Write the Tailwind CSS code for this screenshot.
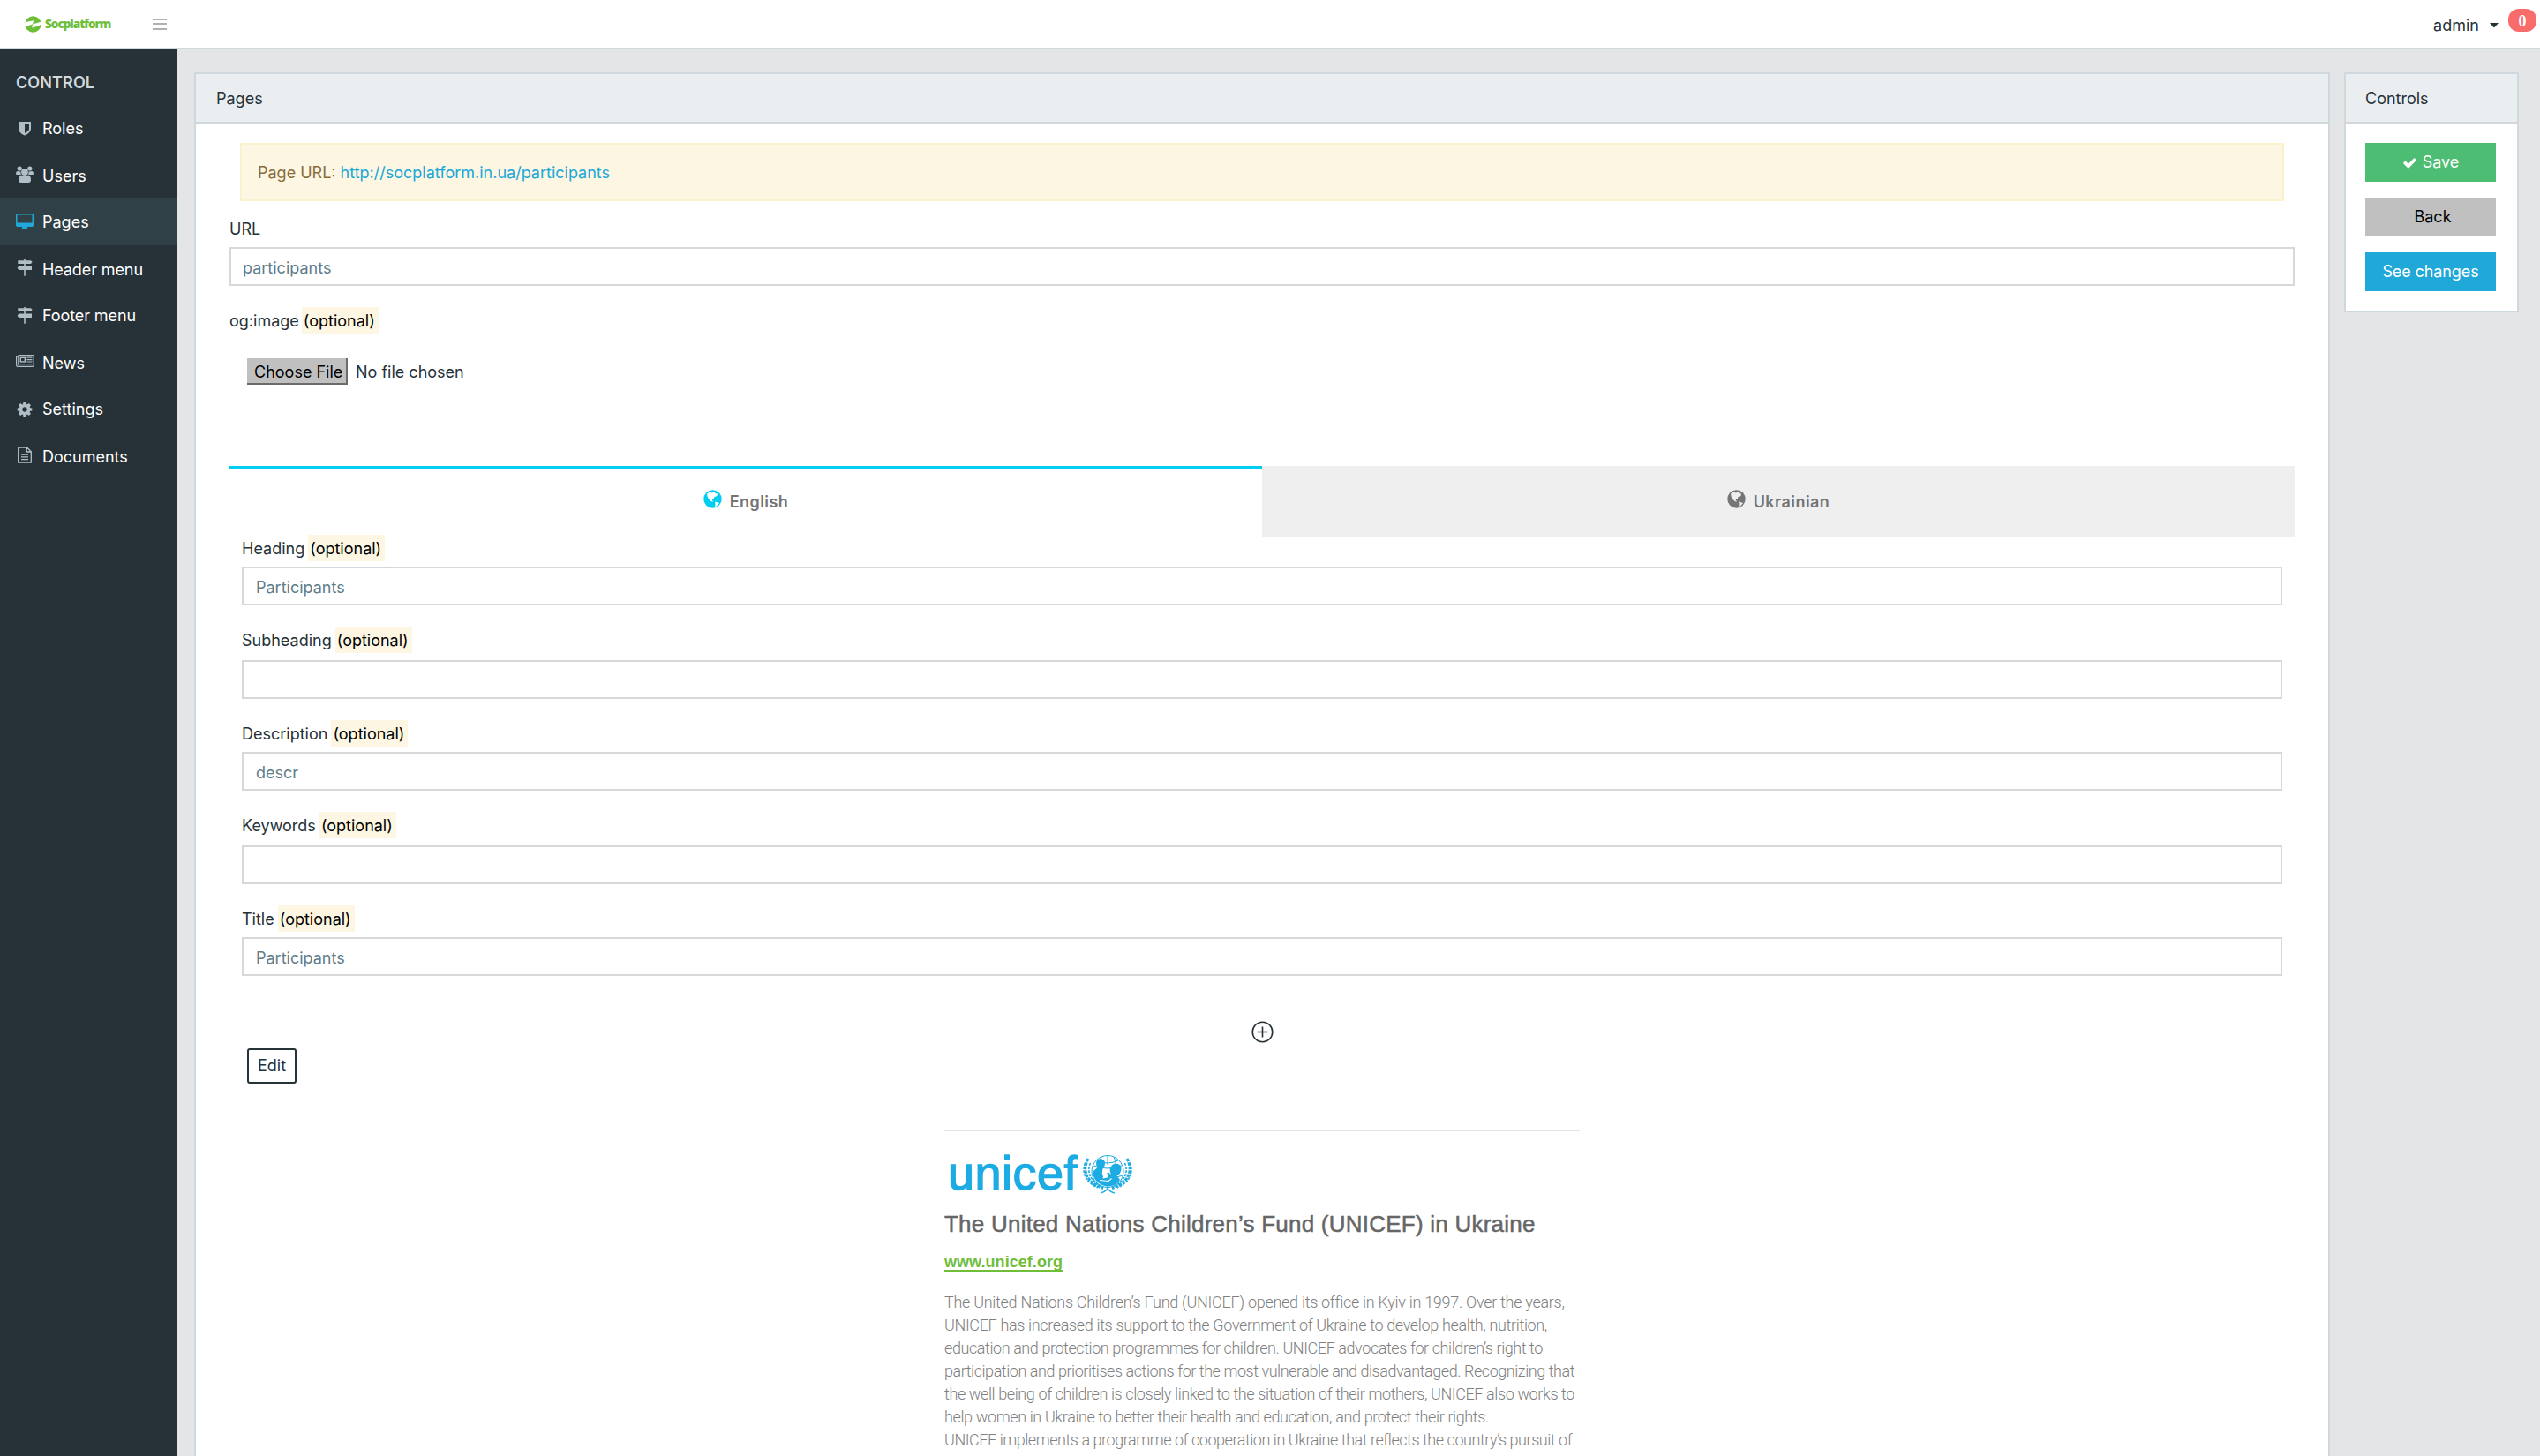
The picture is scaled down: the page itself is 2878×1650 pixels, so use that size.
<!DOCTYPE html>
<html lang="en">
<head>
<meta charset="utf-8">
<title>Pages</title>
<script src="https://cdn.jsdelivr.net/npm/@tailwindcss/browser@4"></script>
</head>
<body class="h-[1650px] w-[2878px] overflow-hidden bg-[#e4e5e6] font-['Inter',sans-serif] text-[18px] text-[#263238]">
<header class="flex h-[56px] items-center border-b-2 border-[#cfd8dc] bg-white">
  <svg class="ml-[28px] size-[19px]" viewBox="0 0 19 19"><circle cx="9.5" cy="9.5" r="9.2" fill="#6fbe3a"/><path d="M0 7.6C3.5 6.4 6.5 5.8 10.2 5.2L9 9.4 19 6.600V9.600C15 11.800 12 12.800 8 13.400L9.400 9.200 0 12.400Z" fill="#fff"/></svg>
  <span class="ml-[4px] w-[80px] pt-px text-[13.5px] font-extrabold tracking-[-1px] text-[#6fbe3a] font-['Open_Sans',sans-serif]">Socplatform</span>
  <div class="ml-[42px] flex w-[16px] flex-col gap-[3.5px]"><i class="h-[2px] bg-[#b0b0b0]"></i><i class="h-[2px] bg-[#b0b0b0]"></i><i class="h-[2px] bg-[#b0b0b0]"></i></div>
  <span class="mr-[12px] ml-auto pt-[2px]">admin</span>
  <svg class="mr-[11px] mt-[3px] h-[6px] w-[10px]" viewBox="0 0 10 6"><path d="M0 0H10L5 5.600Z" fill="#263238"/></svg>
  <span class="mr-[4px] mb-[8px] flex h-[26px] w-[32px] items-center justify-center rounded-[12px] bg-[#f86c6b] pt-[3px] text-[18px] font-bold text-white font-['Liberation_Serif',serif]">0</span>
</header>
<div class="flex h-[1594px]">
  <nav class="w-[200px] shrink-0 bg-[#263238] text-white">
    <div class="h-[62px] pl-[18px] pt-[23px] leading-[30px] font-semibold tracking-[0.1px] text-[#cfd8dc]">CONTROL</div>
    <a class="flex h-[54px] pl-[16px]"><svg class="h-[54px] w-[24px] shrink-0" viewBox="0 0 24 54"><path d="M5 20H19V28C19 31.500 15.500 34 12 35.600 8.500 34 5 31.500 5 28ZM12 22V33C15 31.500 17 30 17 28V22Z" fill="#b0bec5" fill-rule="evenodd"/></svg><span class="pl-[8px] pt-px leading-[54px]">Roles</span></a>
    <a class="flex h-[52px] pl-[16px]"><svg class="h-[54px] w-[24px] shrink-0" viewBox="0 0 24 54"><g fill="#b0bec5"><circle cx="6.200" cy="19" r="2.600"/><circle cx="17.800" cy="19" r="2.600"/><path d="M2 25C2 22.800 3 21.800 4.200 22 6 22.600 7 22.400 7.400 22.200L7.800 26H4C2.600 26 2 25.800 2 25ZM22 25C22 22.800 21 21.800 19.800 22 18 22.600 17 22.400 16.600 22.200L16.200 26H20C21.400 26 22 25.800 22 25Z"/><circle cx="12" cy="23" r="3.900"/><path d="M5 32C5 28.500 6.200 26.600 8.200 26.600 10.500 28.300 13.500 28.300 15.800 26.600 17.800 26.600 19 28.500 19 32 19 34 18 35 16.400 35H7.600C6 35 5 34 5 32Z"/></g></svg><span class="pl-[8px] pt-px leading-[54px]">Users</span></a>
    <a class="flex h-[54px] bg-[#304047] pl-[16px]"><svg class="h-[54px] w-[24px] shrink-0" viewBox="0 0 24 54"><path d="M3.700 18H20.300Q22 18 22 19.700V31.300Q22 33 20.300 33H15L15.200 34.200Q15 35.200 14 35.200H10Q9 35.200 8.800 34.200L9 33H3.700Q2 33 2 31.300V19.700Q2 18 3.700 18ZM3.500 19.600V28.600H20.500V19.600Z" fill="#20a8d8" fill-rule="evenodd"/></svg><span class="pl-[8px] pt-px leading-[54px]">Pages</span></a>
    <a class="flex h-[52px] pl-[16px]"><svg class="h-[54px] w-[24px] shrink-0" viewBox="0 0 24 54"><path d="M11.200 16H12.800V17.200H19L20.600 19.100 19 21H12.800V23.600H20V28H12.800V34.800H11.200V28H5.300L3.600 25.800 5.300 23.600H11.200V21H4.300V17.200H11.200Z" fill="#b0bec5"/></svg><span class="pl-[8px] pt-px leading-[54px] tracking-[-0.1px]">Header menu</span></a>
    <a class="flex h-[54px] pl-[16px]"><svg class="h-[54px] w-[24px] shrink-0" viewBox="0 -2 24 54"><path d="M11.200 16H12.800V17.200H19L20.600 19.100 19 21H12.800V23.600H20V28H12.800V34.800H11.200V28H5.300L3.600 25.800 5.300 23.600H11.200V21H4.300V17.200H11.200Z" fill="#b0bec5"/></svg><span class="pl-[8px] pt-px leading-[54px] tracking-[-0.1px]">Footer menu</span></a>
    <a class="flex h-[52px] pl-[16px]"><svg class="h-[54px] w-[24px] shrink-0" viewBox="0 0 24 54"><g fill="none" stroke="#b0bec5" stroke-width="1.200"><path d="M4.800 18.600H22.200V30.200Q22.200 31.400 21 31.400H4Q2.600 31.400 2.600 30V20H4.800M4.800 18.600V30"/><rect x="7.300" y="21.300" width="5" height="4.600" stroke-width="1.400"/><path d="M14.500 21.200H20.500M14.500 23.600H20.500M14.500 26H20.500M6.800 28.600H12.800M14.500 28.600H20.500"/></g></svg><span class="pl-[8px] pt-px leading-[54px]">News</span></a>
    <a class="flex h-[54px] pl-[16px]"><svg class="h-[54px] w-[24px] shrink-0" viewBox="0 0 24 54"><path transform="translate(2.250 18.250) scale(.01088)" d="M1152 896q0-106-75-181t-181-75-181 75-75 181 75 181 181 75 181-75 75-181zm512-109v222q0 12-8 23t-20 13l-185 28q-19 54-39 91 35 50 107 138 10 12 10 25t-9 23q-27 37-99 108t-94 71q-12 0-26-9l-138-108q-44 23-91 38-16 136-29 186-7 28-36 28h-222q-14 0-24.500-8.500t-11.500-21.500l-28-184q-49-16-90-37l-141 107q-10 9-25 9-14 0-25-11-126-114-165-168-7-10-7-23 0-12 8-23 15-21 51-66.500t54-70.500q-27-50-41-99l-183-27q-13-2-21-12.500t-8-23.500v-222q0-12 8-23t19-13l186-28q14-46 39-92-40-57-107-138-10-12-10-24 0-10 9-23 26-36 98.500-107.500t94.500-71.500q13 0 26 10l138 107q44-23 91-38 16-136 29-186 7-28 36-28h222q14 0 24.500 8.500t11.500 21.500l28 184q49 16 90 37l142-107q9-9 24-9 13 0 25 10 129 119 165 170 7 8 7 22 0 12-8 23-15 21-51 66.500t-54 70.500q26 50 41 98l183 28q13 2 21 12.500t8 23.500z" fill="#b0bec5"/></svg><span class="pl-[8px] pt-px leading-[54px]">Settings</span></a>
    <a class="flex h-[52px] pl-[16px]"><svg class="h-[54px] w-[24px] shrink-0" viewBox="0 0 24 54"><g fill="none" stroke="#b0bec5" stroke-width="1.300"><path d="M5.200 17H14.500L19.300 21.800V34.200H4.700V17.500ZM14.200 17V22H19.300"/><path d="M8 25H16M8 27.800H16M8 30.600H16"/></g></svg><span class="pl-[8px] pt-px leading-[54px]">Documents</span></a>
  </nav>
  <main class="flex flex-1 items-start pl-[20px] pt-[26px]">
    <section class="h-[1568px] w-[2420px] shrink-0 overflow-hidden border-2 border-b-0 border-[#cfd8dc] bg-white">
      <div class="h-[56px] border-b-2 border-[#cfd8dc] bg-[#eaeef1] pl-[23px] pt-px leading-[54px]">Pages</div>
      <div class="px-[38px] pt-[22px]">
        <div class="mx-[12px] h-[66px] border-2 border-[#faf2cc] bg-[#fcf6e2] pl-[18px] leading-[63px] text-[#8a6d3b]">Page URL: <a class="text-[#20a8d8]">http://socplatform.in.ua/participants</a></div>
        <label class="mt-[17px] block h-[30px] leading-[30px]">URL</label>
        <div class="mt-[5px] h-[44px] border-2 border-[#d7d8d9] pl-[13px] leading-[43px] text-[#607d8b]">participants</div>
        <label class="mt-[24px] block h-[30px] leading-[32px]">og:image <span class="-ml-[2px] inline-block h-[30px] bg-[#fcf6e2] pr-[4px] pl-[2px] text-black">(optional)</span></label>
        <div class="mt-[28px] ml-[20px] flex h-[30px]">
          <span class="w-[114px] border-r-2 border-b-2 border-[#6b6b6b] bg-[#c0c0c0] pl-[8px] leading-[31px] text-black">Choose File</span>
          <span class="pl-[9px] leading-[31px]">No file chosen</span>
        </div>
        <div class="mt-[92px] grid h-[80px] grid-cols-2 font-semibold tracking-[0.45px] text-[#757575]">
          <div class="flex items-center justify-center gap-[9px] border-t-[3px] border-[#00cef0]">
            <svg class="mb-[9px] size-[21px]" viewBox="0 0 21 21"><circle cx="10.500" cy="10.500" r="10.200" fill="#00cef0"/><path d="M4 4.500 7 2.500 10 3.500 12.500 2 14 4.500 16 4.200 15.500 7 12.500 8 11.500 10.500 9.500 11 11 13.500 9 13.200 6 10.500 4.500 7.500ZM13 13.500 16.500 14.500 18 15 15 18.500 13.200 19 13.500 16Z" fill="#fff"/></svg>
            <span class="pb-[2px]">English</span>
          </div>
          <div class="flex items-center justify-center gap-[9px] border-t-[3px] border-[#efefef] bg-[#efefef]">
            <svg class="mb-[9px] size-[21px]" viewBox="0 0 21 21"><circle cx="10.500" cy="10.500" r="10.200" fill="#757575"/><path d="M4 4.500 7 2.500 10 3.500 12.500 2 14 4.500 16 4.200 15.500 7 12.500 8 11.500 10.500 9.500 11 11 13.500 9 13.200 6 10.500 4.500 7.500ZM13 13.500 16.500 14.500 18 15 15 18.500 13.200 19 13.500 16Z" fill="#efefef"/></svg>
            <span class="pb-[2px]">Ukrainian</span>
          </div>
        </div>
        <div class="-mt-[2px] px-[14px]">
          <label class="block h-[30px] leading-[32px]">Heading <span class="-ml-px inline-block h-[30px] bg-[#fcf6e2] pr-[4px] pl-[2px] text-black">(optional)</span></label>
          <div class="mt-[6px] h-[44px] border-2 border-[#d7d8d9] pl-[14px] leading-[43px] text-[#607d8b]">Participants</div>
          <label class="mt-[24px] block h-[30px] leading-[32px]">Subheading <span class="-ml-px inline-block h-[30px] bg-[#fcf6e2] pr-[4px] pl-[2px] text-black">(optional)</span></label>
          <div class="mt-[8px] h-[44px] border-2 border-[#d7d8d9]"></div>
          <label class="mt-[24px] block h-[30px] leading-[32px]">Description <span class="-ml-px inline-block h-[30px] bg-[#fcf6e2] pr-[4px] pl-[2px] text-black">(optional)</span></label>
          <div class="mt-[6px] h-[44px] border-2 border-[#d7d8d9] pl-[14px] leading-[43px] text-[#607d8b]">descr</div>
          <label class="mt-[24px] block h-[30px] leading-[32px]">Keywords <span class="-ml-px inline-block h-[30px] bg-[#fcf6e2] pr-[4px] pl-[2px] text-black">(optional)</span></label>
          <div class="mt-[8px] h-[44px] border-2 border-[#d7d8d9]"></div>
          <label class="mt-[24px] block h-[30px] leading-[32px]">Title <span class="-ml-px inline-block h-[30px] bg-[#fcf6e2] pr-[4px] pl-[2px] text-black">(optional)</span></label>
          <div class="mt-[6px] h-[44px] border-2 border-[#d7d8d9] pl-[14px] leading-[43px] text-[#607d8b]">Participants</div>
        </div>
        <svg class="mx-auto mt-[51px] block size-[25px]" viewBox="0 0 25 25"><g fill="none" stroke="#263238" stroke-width="1.600"><circle cx="12.500" cy="12.500" r="11.300"/><path d="M12.500 6.500V18.500M6.500 12.500H18.500"/></g></svg>
        <div class="mt-[6px] ml-[20px] h-[40px] w-[56px] rounded-[3px] border-2 border-[#263238] text-center leading-[35px]">Edit</div>
        <article class="mx-auto mt-[52px] w-[720px] border-t-2 border-[#e3e3e3] font-['Liberation_Sans',sans-serif]">
          <div class="flex h-[76px] pl-[4px]">
            <span class="w-[152px] pt-[16px] text-[54px] leading-[62px] tracking-[0.5px] text-[#1cabe2] [-webkit-text-stroke:1.3px_#1cabe2]">unicef</span>
            <svg class="mt-[26px] h-[46px] w-[58px]" viewBox="0 0 58 46">
              <g fill="none" stroke="#1cabe2" stroke-width="1"><circle cx="29" cy="19.500" r="18"/><path d="M29 1.500V12M22 3Q18 12 20 18M36 3Q40 12 38 18M17 7Q29 13 41 7M13 13Q29 19 45 13M39 26L46 24"/></g>
              <g fill="#1cabe2"><ellipse cx="21" cy="10.500" rx="5" ry="5.500"/><circle cx="38.500" cy="16.500" r="6"/><path d="M18 13 24 15C23 19 22 22 24 25L23.500 27.500 29 26.500 30.500 23.500 28 21.500 30 20.500 33 23C31.500 19 31 16 33 14L44 17C44 21 42 24 39.500 24L43 29C39 35.500 31 38.500 23 35 15 31 12 26 12.500 20 14 17 17 17 18 13Z"/></g>
              <path d="M20 29.500 30 30.500 33.500 27.500" fill="none" stroke="#fff" stroke-width="1.200"/>
              <g fill="none" stroke="#1cabe2" stroke-width="3" stroke-dasharray="3.600 1"><path d="M7 5C1 16 2 31 24 38.500"/><path d="M51 5C57 16 56 31 34 38.500"/></g>
              <g fill="none" stroke="#1cabe2" stroke-width="1.600" stroke-dasharray="3 1.200"><path d="M9.500 10C6 18 7 29 22 36"/><path d="M48.500 10C52 18 51 29 36 36"/><path d="M3.500 10C0 19 2 31 18 38"/><path d="M54.500 10C58 19 56 31 40 38"/></g>
              <path d="M21 44Q28 42 30 37M37 44Q30 42 28 37" fill="none" stroke="#1cabe2" stroke-width="1.500"/>
            </svg>
          </div>
          <h2 class="mt-[13px] text-[26px] leading-[32px] tracking-[0.235px] whitespace-nowrap text-[#666] [-webkit-text-stroke:0.5px_#666]">The United Nations Children’s Fund (UNICEF) in Ukraine</h2>
          <a class="mt-[12px] block h-[30px] leading-[30px]"><span class="inline-block h-[23px] border-b-2 border-[#6fbe3a] font-bold text-[#6fbe3a] tracking-[0.05px] leading-[24px]">www.unicef.org</span></a>
          <div class="mt-[18px] text-[18px] leading-[26px] whitespace-nowrap font-light text-[#808080] font-['Roboto',sans-serif]">
            <p class="tracking-[-0.291px]">The United Nations Children’s Fund (UNICEF) opened its office in Kyiv in 1997. Over the years,</p>
            <p class="tracking-[-0.351px]">UNICEF has increased its support to the Government of Ukraine to develop health, nutrition,</p>
            <p class="tracking-[-0.421px]">education and protection programmes for children. UNICEF advocates for children’s right to</p>
            <p class="tracking-[-0.454px]">participation and prioritises actions for the most vulnerable and disadvantaged. Recognizing that</p>
            <p class="tracking-[-0.393px]">the well being of children is closely linked to the situation of their mothers, UNICEF also works to</p>
            <p class="tracking-[-0.375px]">help women in Ukraine to better their health and education, and protect their rights.</p>
            <p class="tracking-[-0.457px]">UNICEF implements a programme of cooperation in Ukraine that reflects the country’s pursuit of</p>
          </div>
        </article>
      </div>
    </section>
    <section class="ml-[16px] h-[272px] w-[198px] border-2 border-[#cfd8dc] bg-white">
      <div class="h-[56px] border-b-2 border-[#cfd8dc] bg-[#eaeef1] pl-[22px] pt-px leading-[54px]">Controls</div>
      <div class="flex flex-col gap-[18px] pt-[22px] pr-[24px] pl-[22px] text-center leading-[44px]">
        <div class="flex h-[44px] items-center justify-center gap-[6px] bg-[#4dbd74] text-white"><svg class="size-[17px]" viewBox="0 0 1792 1792"><path d="M1671 566q0 40-28 68l-724 724-136 136q-28 28-68 28t-68-28l-136-136-362-362q-28-28-28-68t28-68l136-136q28-28 68-28t68 28l294 295 656-657q28-28 68-28t68 28l136 136q28 28 28 68z" fill="#fff"/></svg>Save</div>
        <div class="h-[44px] bg-[#c0c0c0] pl-[5px] text-black">Back</div>
        <div class="h-[44px] bg-[#20a8d8] tracking-[-0.1px] text-white">See changes</div>
      </div>
    </section>
  </main>
</div>
</body>
</html>
